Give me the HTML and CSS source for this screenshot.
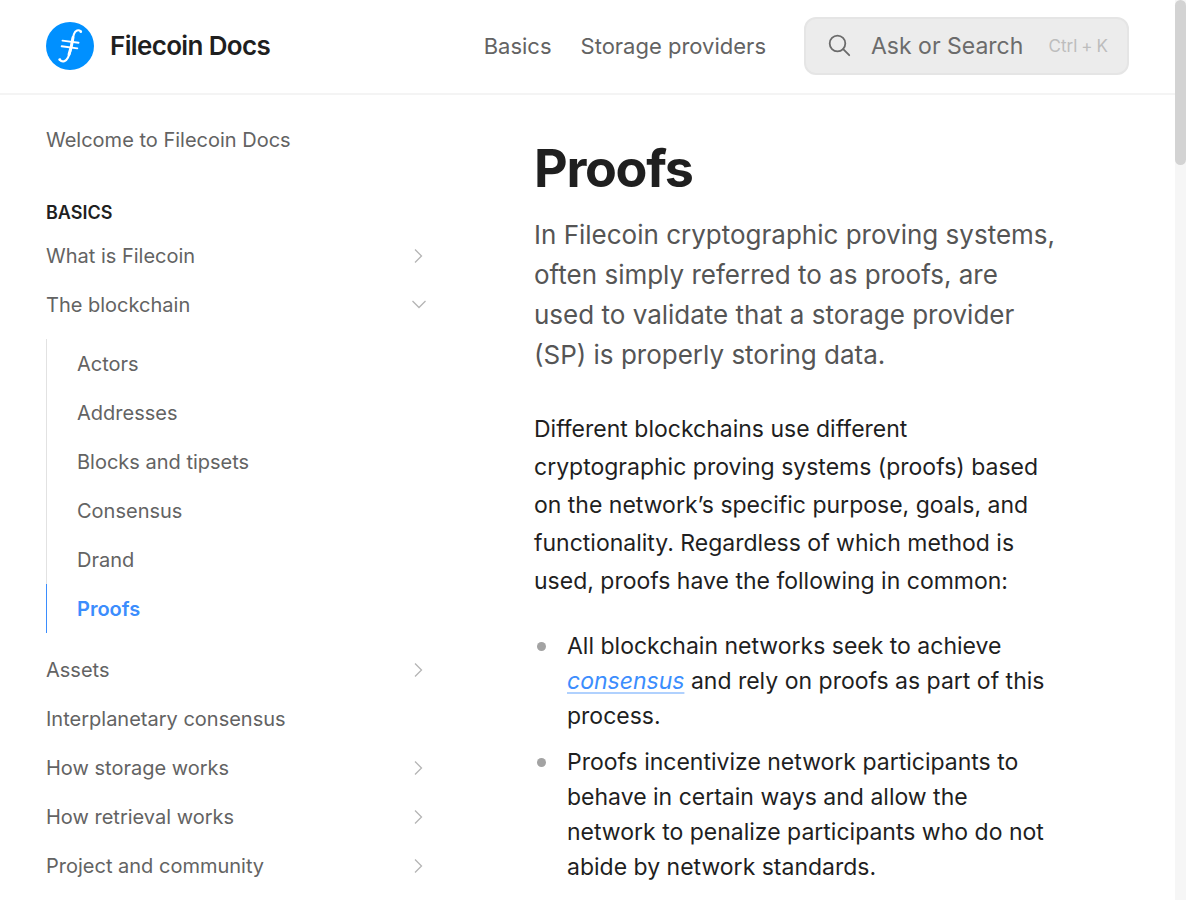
FILE: index.html
```html
<!DOCTYPE html>
<html lang="en">
<head>
<meta charset="utf-8">
<meta name="viewport" content="width=device-width, initial-scale=1">
<title>Proofs | Filecoin Docs</title>
<link rel="stylesheet" href="styles.css">
</head>
<body>
<svg class="sprite" aria-hidden="true">
  <symbol id="chevron" viewBox="0 0 16 16"><path d="M4 1.500l6.500 6.500l-6.500 6.500" fill="none" stroke="currentColor" stroke-width="1.300"/></symbol>
</svg>
<div class="shell">
  <div class="page">
    <header class="header">
      <a class="brand" href="#">
        <svg class="logo" viewBox="0 0 48 48" aria-hidden="true">
          <circle cx="24" cy="24" r="24" fill="#0090ff"/>
          <g fill="none" stroke="#fff" stroke-linecap="round">
            <path d="M34.800 9.300C32.500 7.200 29.300 8.200 28 12C26.800 15.600 26.500 18.500 25.800 22C25 26.500 24 31.500 22 35.500C20.200 39.200 16.500 40.700 13.800 38" stroke-width="2.100"/>
            <path d="M27 15.500C26.300 20 25.300 26 23 32.500" stroke-width="2.900"/>
            <path d="M16.500 18.600l16 2.100M15.700 24.300l15.600 2.100" stroke-width="1.900"/>
          </g>
          <circle cx="34.800" cy="9.700" r="1.300" fill="#fff"/>
          <circle cx="13.800" cy="37.600" r="1.400" fill="#fff"/>
        </svg>
        <span>Filecoin Docs</span>
      </a>
      <nav class="topnav" aria-label="Sections">
        <a href="#">Basics</a>
        <a href="#">Storage providers</a>
      </nav>
      <button class="search" type="button">
        <svg class="search-icon" viewBox="0 0 24 24" aria-hidden="true"><g fill="none" stroke="currentColor" stroke-width="1.800" stroke-linecap="round"><circle cx="9.500" cy="9.500" r="7.800"/><path d="M15.200 15.200l6 6"/></g></svg>
        <span>Ask or Search</span>
        <span class="keys"><kbd>Ctrl</kbd><span>+</span><kbd>K</kbd></span>
      </button>
    </header>
    <div class="columns">
      <nav class="sidebar" aria-label="Pages">
        <a class="item" href="#">Welcome to Filecoin Docs</a>
        <h2 class="group">Basics</h2>
        <a class="item" href="#">What is Filecoin <svg class="chevron"><use href="#chevron"/></svg></a>
        <a class="item" href="#">The blockchain <svg class="chevron open"><use href="#chevron"/></svg></a>
        <div class="subnav">
          <a class="item" href="#">Actors</a>
          <a class="item" href="#">Addresses</a>
          <a class="item" href="#">Blocks and tipsets</a>
          <a class="item" href="#">Consensus</a>
          <a class="item" href="#">Drand</a>
          <a class="item current" href="#" aria-current="page">Proofs</a>
        </div>
        <a class="item" href="#">Assets <svg class="chevron"><use href="#chevron"/></svg></a>
        <a class="item" href="#">Interplanetary consensus</a>
        <a class="item" href="#">How storage works <svg class="chevron"><use href="#chevron"/></svg></a>
        <a class="item" href="#">How retrieval works <svg class="chevron"><use href="#chevron"/></svg></a>
        <a class="item" href="#">Project and community <svg class="chevron"><use href="#chevron"/></svg></a>
      </nav>
      <main class="content">
        <h1>Proofs</h1>
        <p class="lead">In Filecoin cryptographic proving systems, often simply referred to as proofs, are used to validate that a storage provider (SP) is properly storing data.</p>
        <p class="text">Different blockchains use different cryptographic proving systems (proofs) based on the network’s specific purpose, goals, and functionality. Regardless of which method is used, proofs have the following in common:</p>
        <ul class="list">
          <li>All blockchain networks seek to achieve <a href="#">consensus</a> and rely on proofs as part of this process.</li>
          <li>Proofs incentivize network participants to behave in certain ways and allow the network to penalize participants who do not abide by network standards.</li>
        </ul>
      </main>
    </div>
  </div>
  <div class="scrollbar" aria-hidden="true"><div class="thumb"></div></div>
</div>
</body>
</html>
```
FILE: styles.css
```css
* { box-sizing: border-box; }
body {
  margin: 0;
  background: #fff;
  color: #1f1f1f;
  font-family: Inter, "Liberation Sans", sans-serif;
  font-size: 23px;
}
a { color: inherit; text-decoration: none; }
.sprite { display: none; }
.shell {
  display: grid;
  grid-template-columns: minmax(0, 1fr) 11px;
  height: 100vh;
  overflow: hidden;
}
.page { min-width: 0; overflow: hidden; }
.scrollbar { background: #f6f6f6; }
.thumb { height: 165px; border-radius: 6px; background: #d3d3d3; }

.header {
  display: flex;
  align-items: center;
  height: 95px;
  padding: 0 46px 1px;
  border-bottom: 2px solid #f4f4f4;
  color: #636363;
}
.brand {
  display: flex;
  align-items: center;
  gap: 16px;
  margin-right: auto;
  color: #1f1f1f;
  font-size: 26px;
  font-weight: 600;
  line-height: 32px;
  letter-spacing: -0.025em;
}
.logo { width: 48px; height: 48px; }
.topnav { display: flex; gap: 29px; margin-right: 38px; font-size: 22px; }
.search {
  display: flex;
  align-items: center;
  width: 325px;
  height: 58px;
  padding: 0 19px 0 22px;
  border: 2px solid #e5e5e5;
  border-radius: 12px;
  background: #ececec;
  color: #6b6b6b;
  font: inherit;
}
.search-icon { width: 24px; height: 24px; margin-right: 19px; }
.keys {
  display: flex;
  gap: 4px;
  margin-left: auto;
  color: #bdbdbd;
  font-size: 17px;
}
.keys kbd { font-family: inherit; font-size: inherit; }

.columns {
  display: grid;
  grid-template-columns: 387px minmax(0, 1fr);
  gap: 101px;
  padding: 0 116px 0 46px;
}
.sidebar { padding-top: 20px; color: #636363; font-size: 20px; }
.item {
  display: flex;
  align-items: center;
  justify-content: space-between;
  height: 49px;
  padding-right: 6px;
}
.group {
  margin: 38px 0 7px;
  color: #1f1f1f;
  font-size: 18px;
  font-weight: 600;
  line-height: 22px;
  text-transform: uppercase;
}
.chevron { width: 16px; height: 16px; color: #b5b5b5; }
.open { transform: rotate(90deg); }
.subnav {
  margin: 10px 0 12px;
  border-left: 1px solid #e2e2e2;
}
.subnav .item {
  margin-left: -1px;
  padding-left: 30px;
  border-left: 1px solid transparent;
}
.subnav .current {
  border-left-color: #3b8dfd;
  color: #3b8dfd;
  font-weight: 600;
}

.content { padding-top: 42px; }
h1 {
  margin: 0 0 14px;
  font-size: 52px;
  font-weight: 700;
  line-height: 64px;
  letter-spacing: -0.025em;
}
.lead {
  margin: 0 0 35px;
  color: #555;
  font-size: 26px;
  line-height: 40px;
}
.text { margin: 0 0 29px; line-height: 38px; }
.list {
  display: grid;
  gap: 11px;
  margin: 0;
  padding: 0;
  line-height: 35px;
  list-style: none;
}
.list li { position: relative; padding-left: 33px; }
.list li::before {
  content: "";
  position: absolute;
  top: 13px;
  left: 3px;
  width: 9px;
  height: 9px;
  border-radius: 50%;
  background: #a3a3a3;
}
.list a {
  color: #3b8dfd;
  font-style: italic;
  text-decoration: underline 2px #b0d1fe;
  text-decoration-skip-ink: none;
  text-underline-offset: 3px;
}
```
